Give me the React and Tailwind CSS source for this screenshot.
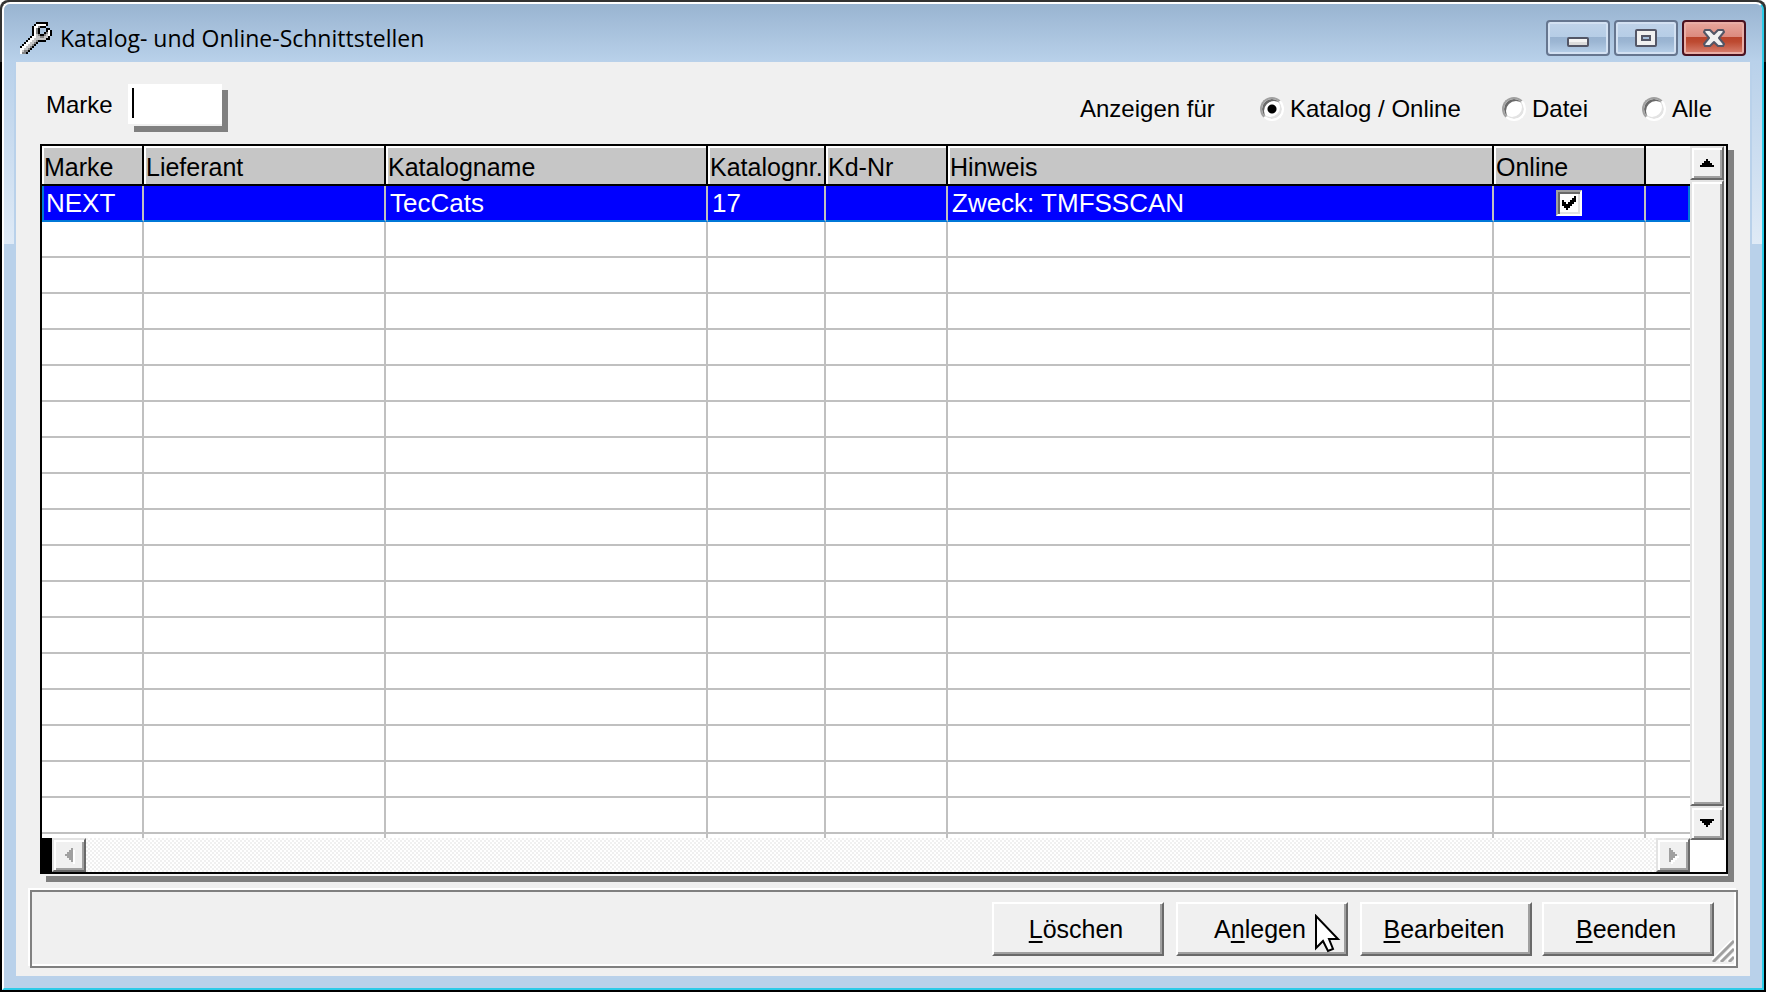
import { useState } from 'react';

const COLUMNS = [
  { key: 'marke', label: 'Marke', col: 'w-[102px]' },
  { key: 'lieferant', label: 'Lieferant', col: 'w-[242px]' },
  { key: 'katalogname', label: 'Katalogname', col: 'w-[322px]' },
  { key: 'katalognr', label: 'Katalognr.', col: 'w-[118px]' },
  { key: 'kdnr', label: 'Kd-Nr', col: 'w-[122px]' },
  { key: 'hinweis', label: 'Hinweis', col: '' },
];

const ROWS = [
  { marke: 'NEXT', lieferant: '', katalogname: 'TecCats', katalognr: '17', kdnr: '', hinweis: 'Zweck: TMFSSCAN', online: true },
];

// empty lines that fill up the list below the data
const EMPTY_ROWS = Array.from({ length: 18 }, (_, i) => i);

const FILTERS = ['Katalog / Online', 'Datei', 'Alle'];

const WRENCH = [
  '........BBBBBB..',
  '.......BWWWWWB..',
  '......BWWGBBB...',
  '......BWGB...BB.',
  '......BWGB...BWB',
  '......BWGB..BGWB',
  '......BWLGBBGLWB',
  '.....BWWLLGGLLB.',
  '....BWWLLLLLLBB.',
  '...BWWLLGBBBB...',
  '..BWWLLGB.......',
  '.BWWLLGB........',
  'BWWLLGB.........',
  'WWLLGB..........',
  'WLGGB...........',
  'WGGB............',
];

const PIXEL_COLORS = { B: '#000000', W: '#ffffff', L: '#c6c6c6', G: '#848484' };

function WrenchIcon() {
  return (
    <svg className="w-8 h-8 shrink-0" viewBox="0 0 16 16" shapeRendering="crispEdges" aria-hidden="true">
      {WRENCH.map((line, y) =>
        line.split('').map((c, x) =>
          c === '.' ? null : <rect key={`${x}-${y}`} x={x} y={y} width="1" height="1" fill={PIXEL_COLORS[c]} />
        )
      )}
    </svg>
  );
}

function CaptionButton({ label, close, children }) {
  return (
    <button
      type="button"
      aria-label={label}
      className={`w-16 h-9 flex items-center justify-center rounded-[4px] border-2 ${
        close
          ? 'border-[#4a1220] bg-[linear-gradient(#e8a79d_0%,#dc8a7e_46%,#b9432b_47%,#bd4a31_62%,#d98373_100%)] shadow-[inset_0_0_0_2px_#e9aea6]'
          : 'border-[#66768f] bg-[linear-gradient(#c0d3e9_0%,#b6cde6_46%,#98b2d0_47%,#9cb6d3_62%,#b9d1ea_100%)] shadow-[inset_0_0_0_2px_#d3e1f2]'
      }`}
    >
      {children}
    </button>
  );
}

function TitleBar() {
  return (
    <header className="h-[58px] pt-2.5 pl-4 pr-4 flex items-center rounded-t-md bg-linear-to-b from-[#99b4d1] to-[#b9d1ea]">
      <WrenchIcon />
      <h1 className="ml-2 flex-1 font-['Open_Sans',sans-serif] text-[23px] leading-8 text-black whitespace-nowrap">
        Katalog- und Online-Schnittstellen
      </h1>
      <div className="flex gap-1">
        <CaptionButton label="Minimieren">
          <svg className="w-[22px] h-[18px]" viewBox="0 0 22 18" aria-hidden="true">
            <rect x="1" y="9" width="20" height="8" rx="1" fill="#f4f4f4" stroke="#535666" strokeWidth="2" />
            <rect x="2" y="13" width="18" height="3" fill="#dcdcdc" />
          </svg>
        </CaptionButton>
        <CaptionButton label="Maximieren">
          <svg className="w-[22px] h-[18px]" viewBox="0 0 22 18" aria-hidden="true">
            <rect x="1" y="1" width="20" height="16" rx="1" fill="#f0f0f0" stroke="#535666" strokeWidth="2" />
            <rect x="7" y="7" width="8" height="4" fill="#a5bfdc" stroke="#535666" strokeWidth="2" />
          </svg>
        </CaptionButton>
        <CaptionButton label="Schließen" close>
          <svg className="w-[22px] h-[18px]" viewBox="0 0 22 18" aria-hidden="true">
            <path
              d="M2 1h5l4 4 4-4h5l1 2-5 6 5 6-1 2h-5l-4-4-4 4H2l-1-2 5-6-5-6z"
              fill="#f0f0f0"
              stroke="#535666"
              strokeWidth="2"
              strokeLinejoin="round"
            />
          </svg>
        </CaptionButton>
      </div>
    </header>
  );
}

function FilterBar({ filter, onFilter }) {
  return (
    <div className="pl-[30px] pr-9 pt-[22px] flex items-center text-[24px] leading-7">
      <label htmlFor="marke" className="w-[82px]">Marke</label>
      <div className="relative pb-0.5 shadow-[6px_6px_0_0_#808080] bg-[#f0f0f0]">
        <input id="marke" type="text" className="block w-[94px] h-10 px-1 bg-white outline-none caret-transparent" />
        <span className="absolute left-1 top-1 w-0.5 h-[30px] bg-black" />
      </div>
      <fieldset className="ml-auto pt-2 grid grid-cols-[180px_242px_140px_72px]">
        <span>Anzeigen für</span>
        {FILTERS.map(name => (
          <label key={name} className="flex items-center gap-1.5 whitespace-nowrap">
            <input
              type="radio"
              name="filter"
              checked={filter === name}
              onChange={() => onFilter(name)}
              className="appearance-none w-6 h-6 shrink-0 rounded-full border-2 border-t-[#a0a0a0] border-l-[#a0a0a0] border-r-white border-b-white bg-white
                         shadow-[inset_2px_2px_0_0_#696969,inset_-2px_-2px_0_0_#e3e3e3]
                         checked:bg-[radial-gradient(circle,#000_4px,#fff_5px)]"
            />
            {name}
          </label>
        ))}
      </fieldset>
    </div>
  );
}

const ARROWS = {
  up: { box: '0 0 7 4', size: 'w-[14px] h-2', d: 'M3 0h1v1h1v1h1v1h1v1H0V3h1V2h1V1h1z' },
  down: { box: '0 0 7 4', size: 'w-[14px] h-2', d: 'M0 0h7v1H6v1H5v1H4v1H3V3H2V2H1V1H0z' },
  left: { box: '0 0 4 7', size: 'w-2 h-[14px]', d: 'M4 0v7H3V6H2V5H1V4H0V3h1V2h1V1h1V0z' },
  right: { box: '0 0 4 7', size: 'w-2 h-[14px]', d: 'M0 0v7h1V6h1V5h1V4h1V3H3V2H2V1H1V0z' },
};

function ScrollButton({ dir, label, disabled }) {
  const arrow = ARROWS[dir];
  return (
    <button
      type="button"
      aria-label={label}
      disabled={disabled}
      className="w-[34px] h-[34px] shrink-0 flex items-center justify-center bg-[#f0f0f0] border-2 border-t-[#e3e3e3] border-l-[#e3e3e3] border-r-[#696969] border-b-[#696969]
                 shadow-[inset_2px_2px_0_0_#fff,inset_-2px_-2px_0_0_#a0a0a0]"
    >
      <svg className={`${arrow.size} overflow-visible`} viewBox={arrow.box} shapeRendering="crispEdges" aria-hidden="true">
        {disabled && <path d={arrow.d} fill="#fff" transform="translate(1 1)" />}
        <path d={arrow.d} fill={disabled ? '#a0a0a0' : '#000'} />
      </svg>
    </button>
  );
}

function OnlineCheck({ checked }) {
  return (
    <span className="relative block w-[26px] h-[26px] mx-auto">
      <input
        type="checkbox"
        aria-label="Online"
        defaultChecked={checked}
        className="peer appearance-none block w-full h-full bg-white border-2 border-t-[#a0a0a0] border-l-[#a0a0a0] border-r-white border-b-white
                   shadow-[inset_2px_2px_0_0_#696969,inset_-2px_-2px_0_0_#e3e3e3]"
      />
      <svg className="absolute inset-0 hidden peer-checked:block pointer-events-none" viewBox="0 0 13 13" shapeRendering="crispEdges" aria-hidden="true">
        <path d="M3 5h1v1h1v1h1V6h1V5h1V4h1V3h1v3H9v1H8v1H7v1H6v1H5V9H4V8H3z" fill="#000" />
      </svg>
    </span>
  );
}

function CatalogTable() {
  const th = 'h-10 p-0 pt-1 pl-0.5 text-left font-normal text-[25px] leading-7 whitespace-nowrap overflow-hidden border-r-2 border-b-2 border-black bg-[#c6c6c6] shadow-[inset_2px_2px_0_0_#fff]';
  const selected = 'h-9 p-0 pl-1 whitespace-nowrap overflow-hidden border-r-2 border-r-[#c0c0c0] border-b-2 border-b-[#0078d7]';
  const empty = 'h-9 p-0 border-r-2 border-b-2 border-[#c0c0c0]';

  return (
    <table className="w-full table-fixed border-separate border-spacing-0">
      <colgroup>
        {COLUMNS.map(c => <col key={c.key} className={c.col} />)}
        <col className="w-[152px]" />
        <col className="w-[44px]" />
      </colgroup>
      <thead>
        <tr>
          {COLUMNS.map(c => <th key={c.key} className={th}>{c.label}</th>)}
          <th className={th}>Online</th>
          <td className="h-10 p-0 border-b-2 border-black bg-[#f0f0f0] shadow-[inset_0_2px_0_0_#fff]" />
        </tr>
      </thead>
      <tbody>
        {ROWS.map(row => (
          <tr key={row.marke} className="bg-[#0000ff] text-white text-[26px] leading-8">
            {COLUMNS.map((c, i) => (
              <td key={c.key} className={`${selected} ${i === 0 ? 'shadow-[inset_2px_0_0_0_#0078d7]' : ''}`}>
                {row[c.key]}
              </td>
            ))}
            <td className="h-9 p-0 border-r-2 border-r-[#c0c0c0] border-b-2 border-b-[#0078d7]">
              <OnlineCheck checked={row.online} />
            </td>
            <td className="h-9 p-0 border-r-2 border-b-2 border-[#0078d7]" />
          </tr>
        ))}
        {EMPTY_ROWS.map(i => (
          <tr key={i}>
            {COLUMNS.map(c => <td key={c.key} className={empty} />)}
            <td className={empty} />
            <td className="h-9 p-0 border-b-2 border-[#c0c0c0]" />
          </tr>
        ))}
      </tbody>
    </table>
  );
}

function CatalogList() {
  return (
    <div className="flex-1 min-h-0 mt-[18px] ml-6 mr-[22px] mb-2.5 flex flex-col pb-0.5 shadow-[6px_6px_0_0_#808080]">
      <div className="flex-1 min-h-0 flex border-2 border-black bg-white">
        <div className="flex-1 min-w-0 flex flex-col">
          <div className="flex-1 min-h-0 overflow-hidden">
            <CatalogTable />
          </div>
          {/* horizontal scrollbar */}
          <div className="flex h-[34px]">
            <div className="w-2.5 bg-black" />
            <ScrollButton dir="left" label="Nach links" disabled />
            <div className="flex-1 bg-[repeating-conic-gradient(#fff_0_25%,#f0f0f0_0_50%)] bg-[length:4px_4px]" />
            <ScrollButton dir="right" label="Nach rechts" disabled />
          </div>
        </div>
        {/* vertical scrollbar */}
        <div className="w-9 flex flex-col">
          <div className="flex-1 flex flex-col pr-0.5 bg-[#f0f0f0]">
            <ScrollButton dir="up" label="Nach oben" />
            <div
              className="flex-1 border-2 border-t-[#e3e3e3] border-l-[#e3e3e3] border-r-[#696969] border-b-[#696969]
                         shadow-[inset_2px_2px_0_0_#fff,inset_-2px_-2px_0_0_#a0a0a0]"
            />
            <ScrollButton dir="down" label="Nach unten" />
          </div>
          <div className="h-8" />
        </div>
      </div>
    </div>
  );
}

function PushButton({ children }) {
  return (
    <button
      type="button"
      className="relative w-[172px] h-[54px] pr-1 text-[25px] leading-7 bg-[#f0f0f0] border-2 border-t-white border-l-white border-r-[#696969] border-b-[#696969]
                 shadow-[inset_-2px_-2px_0_0_#a0a0a0]"
    >
      {children}
    </button>
  );
}

function Key({ children }) {
  return <span className="underline decoration-2 underline-offset-3 [text-decoration-skip-ink:none]">{children}</span>;
}

function Footer() {
  return (
    <footer className="relative mt-1 ml-[14px] mr-3 mb-2 py-2.5 pr-[22px] flex justify-end gap-2.5 border-2 border-[#808080] shadow-[-2px_-2px_0_0_#fff,inset_-2px_-2px_0_0_#fff]">
      <div className="flex gap-3">
        <PushButton><Key>L</Key>öschen</PushButton>
        <PushButton>
          A<Key>n</Key>legen
          {/* mouse pointer */}
          <svg className="absolute left-[136px] top-2.5 w-[27px] h-[39px]" viewBox="0 0 27 39" aria-hidden="true">
            <path d="M2 2v32l7-7 5 10 5-2-4-10h9z" fill="#fff" stroke="#000" strokeWidth="2" />
          </svg>
        </PushButton>
        <PushButton><Key>B</Key>earbeiten</PushButton>
      </div>
      <PushButton><Key>B</Key>eenden</PushButton>
      <svg className="absolute right-0.5 bottom-1 w-[22px] h-[22px]" viewBox="0 0 22 22" aria-hidden="true">
        <path d="M-1 21L22-2M7 21L22 6M15 21l7-7" stroke="#fff" strokeWidth="2" />
        <path d="M1 22L22 1M9 22L22 9M17 22l5-5" stroke="#a0a0a0" strokeWidth="3" />
      </svg>
    </footer>
  );
}

function FrameSide({ right }) {
  return (
    <div className={`w-3 flex ${right ? 'justify-end' : ''}`}>
      <div className="w-2.5 h-[182px] bg-linear-to-b from-[#b9d1ea] to-[#dfeaf6]" />
    </div>
  );
}

function App() {
  const [filter, setFilter] = useState('Katalog / Online');

  return (
    <div className="h-screen p-0.5 rounded-t-lg bg-[linear-gradient(#333_62px,#000_62px)] font-['Liberation_Sans',Arial,sans-serif] text-black">
      <div className="h-full flex flex-col rounded-t-lg border-2 border-t-white border-l-white border-r-[#2ccbe8] border-b-[#2ccbe8] bg-[#b9d1ea]">
        <TitleBar />
        <div className="flex-1 min-h-0 flex pb-3">
          <FrameSide />
          <main className="flex-1 min-w-0 flex flex-col bg-[#f0f0f0]">
            <FilterBar filter={filter} onFilter={setFilter} />
            <CatalogList />
            <Footer />
          </main>
          <FrameSide right />
        </div>
      </div>
    </div>
  );
}

export default App;
